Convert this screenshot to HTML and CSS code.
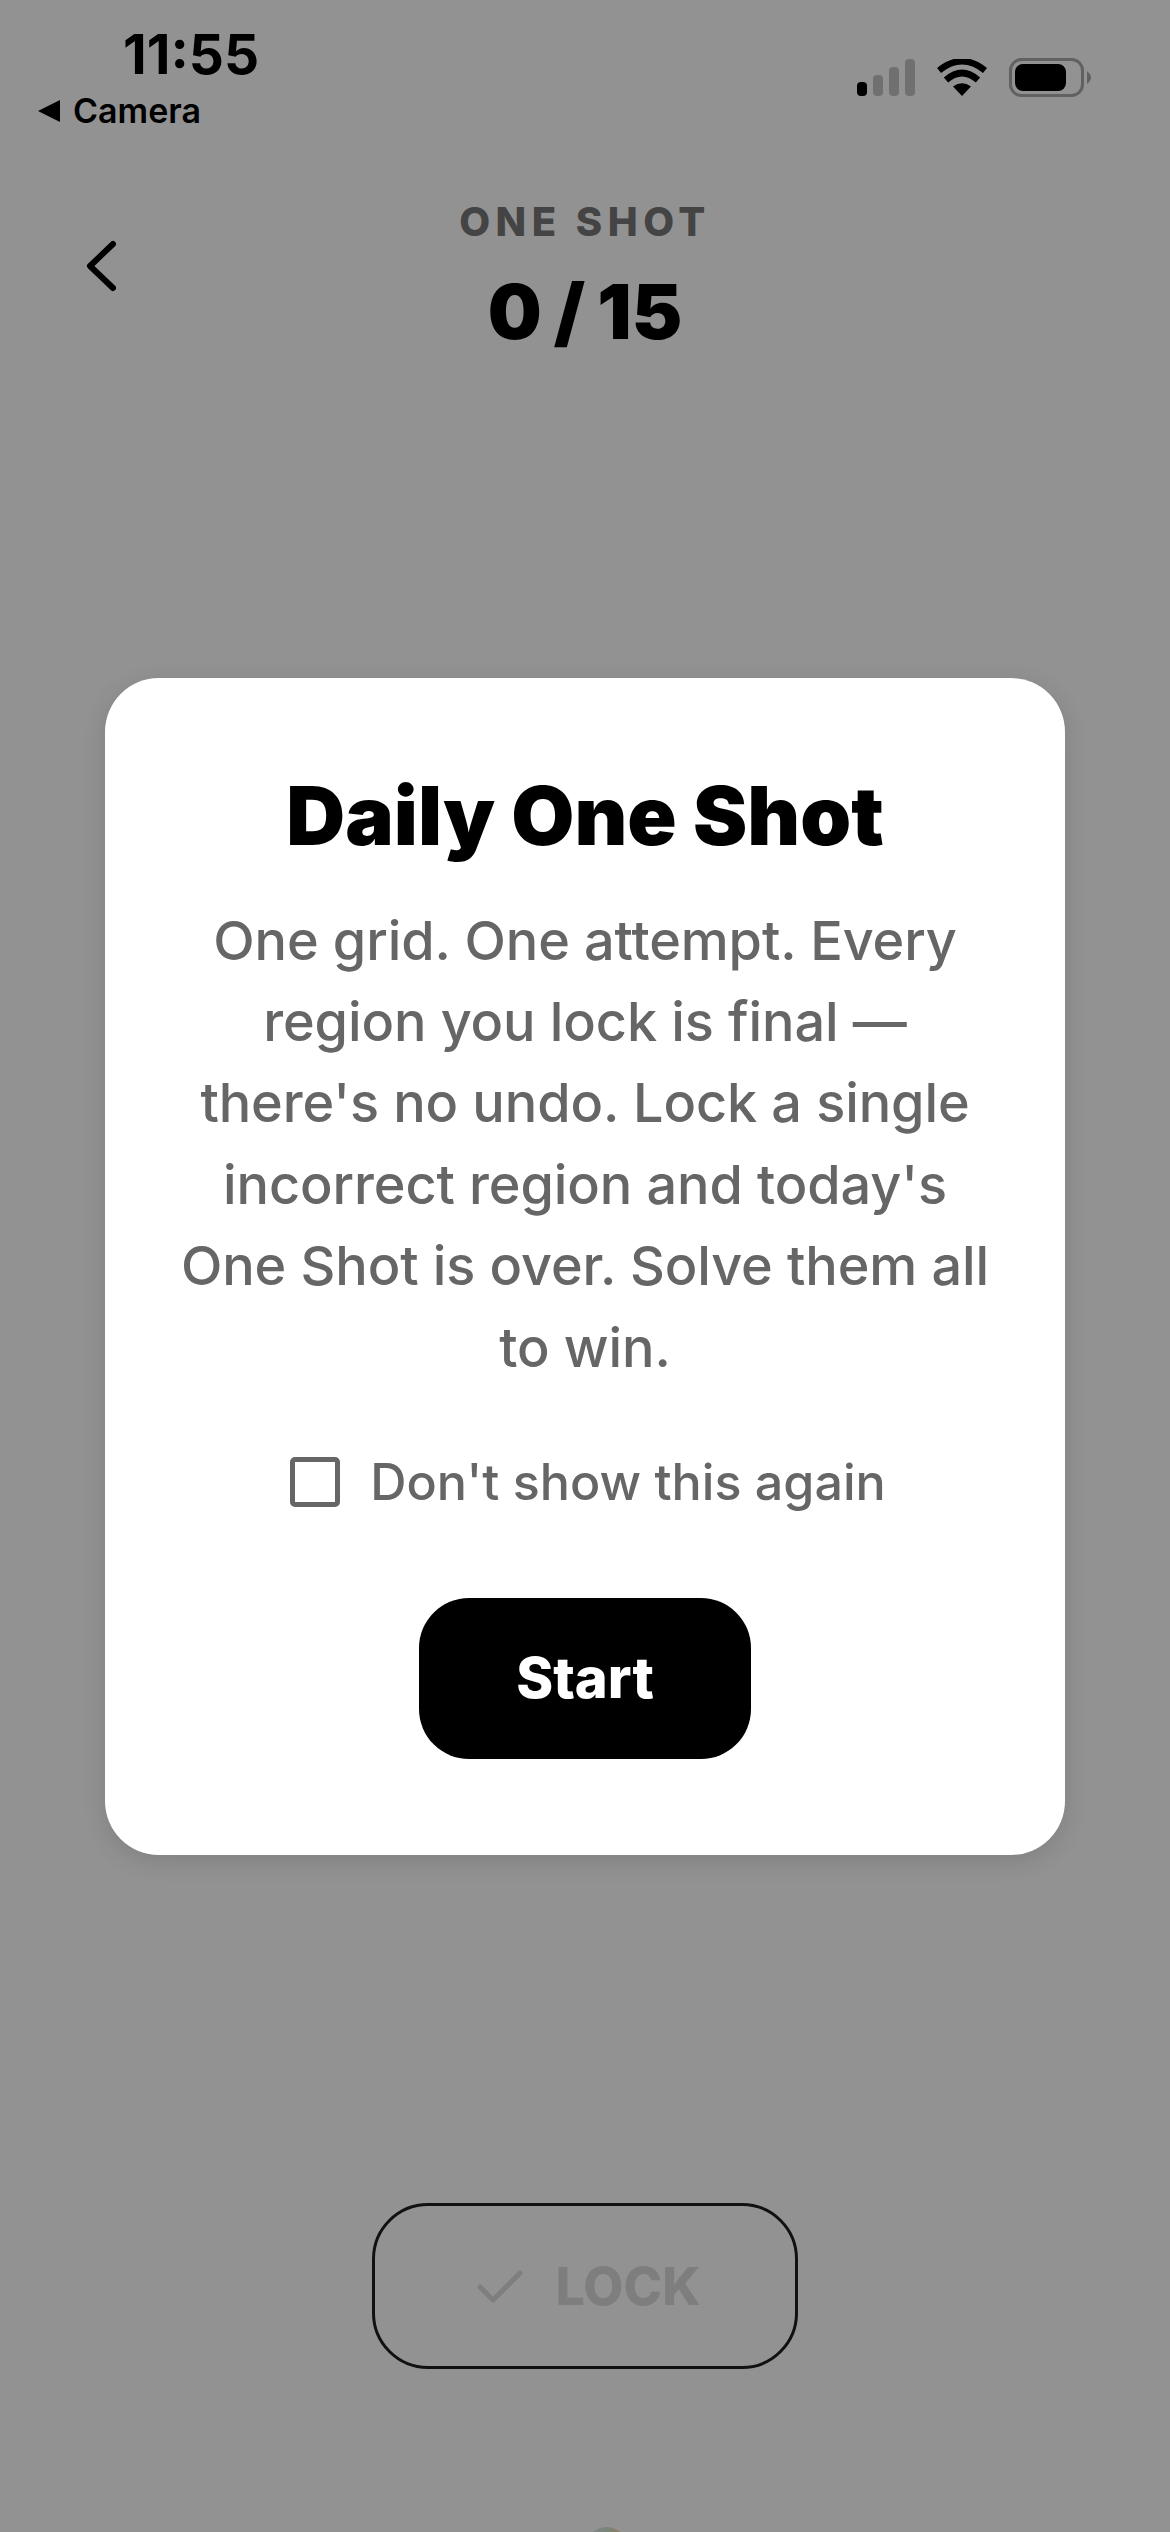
FILE: index.html
```html
<!DOCTYPE html>
<html>
<head>
<meta charset="utf-8"/>
<title>Daily One Shot</title>
<link rel="stylesheet" href="styles.css">
</head>
<body>
<div class="screen">

  <div class="status">
    <div class="status-left">
      <div class="clock">11:55</div>
      <div class="backlink"><span class="back-arrow"></span>Camera</div>
    </div>
    <div class="status-icons">
      <svg width="58" height="38" viewBox="0 0 58 38">
        <rect x="0" y="23" width="10" height="14" rx="4" fill="#000"/>
        <rect x="16" y="16" width="10" height="21" rx="4" fill="#c4c4c4"/>
        <rect x="32" y="8" width="10" height="29" rx="4" fill="#c4c4c4"/>
        <rect x="48" y="0" width="10" height="37" rx="4" fill="#c4c4c4"/>
      </svg>
      <svg width="50" height="37" viewBox="0 0 50 37">
        <path d="M25 37 L16 27.5 Q25 21 34 27.5 Z" fill="#000"/>
        <path d="M9 21 Q25 7 41 21" fill="none" stroke="#000" stroke-width="6.5"/>
        <path d="M2 11.5 Q25 -7 48 11.5" fill="none" stroke="#000" stroke-width="6.5"/>
      </svg>
      <svg width="82" height="39" viewBox="0 0 82 39">
        <rect x="1.5" y="1.5" width="72" height="36" rx="11" fill="none" stroke="#a9a9a9" stroke-width="3"/>
        <rect x="6" y="6" width="51" height="27" rx="8" fill="#000"/>
        <path d="M78 13 Q86 19.5 78 26 Z" fill="#a9a9a9"/>
      </svg>
    </div>
  </div>

  <div class="topbar">
    <svg class="chevron" width="36" height="56" viewBox="0 0 36 56">
      <path d="M30 6 L7 28 L30 50" fill="none" stroke="#000" stroke-width="6" stroke-linecap="round" stroke-linejoin="round"/>
    </svg>
    <div class="eyebrow">ONE SHOT</div>
    <div class="score">0 / 15</div>
  </div>

  <div class="board"></div>

  <button class="lock">
    <svg width="46" height="34" viewBox="0 0 46 34">
      <path d="M3 18 L16 31 L43 4" fill="none" stroke="#dcdcdc" stroke-width="5" stroke-linecap="round" stroke-linejoin="round"/>
    </svg>
    <span>LOCK</span>
  </button>

  <div class="peek"><div class="peek-dot"></div></div>

  <div class="scrim">
    <div class="card">
      <h1>Daily One Shot</h1>
      <p>One grid. One attempt. Every region you lock is final — there's no undo. Lock a single incorrect region and today's One Shot is over. Solve them all to win.</p>
      <label class="again"><span class="box"></span>Don't show this again</label>
      <button class="start">Start</button>
    </div>
  </div>

</div>
</body>
</html>
```

FILE: styles.css
```css
html, body {
  margin: 0;
  padding: 0;
}

body {
  background: #929292;
  font-family: Inter, "Liberation Sans", sans-serif;
}

.screen {
  position: relative;
  width: 1170px;
  height: 2532px;
  overflow: hidden;
  background: #fff;
  display: flex;
  flex-direction: column;
}

/* status bar */
.status {
  display: flex;
  justify-content: space-between;
  padding: 27px 79px 0 38px;
  height: 130px;
  box-sizing: border-box;
}

.clock {
  font-size: 55px;
  font-weight: 700;
  line-height: 54px;
  padding-left: 85px;
  color: #000;
}

.backlink {
  display: flex;
  align-items: center;
  gap: 13px;
  font-size: 34px;
  font-weight: 600;
  line-height: 40px;
  margin-top: 10px;
  color: #000;
}

.back-arrow {
  width: 0;
  height: 0;
  border-top: 11px solid transparent;
  border-bottom: 11px solid transparent;
  border-right: 22px solid #000;
}

.status-icons {
  display: flex;
  align-items: center;
  gap: 22px;
  height: 39px;
  margin-top: 31px;
}

/* header */
.topbar {
  position: relative;
  display: flex;
  flex-direction: column;
  align-items: center;
  padding-top: 69px;
}

.chevron {
  position: absolute;
  left: 83px;
  top: 108px;
}

.eyebrow {
  font-size: 40px;
  font-weight: 800;
  line-height: 46px;
  letter-spacing: 5.5px;
  color: #777;
}

.score {
  font-size: 76px;
  font-weight: 900;
  line-height: 88px;
  margin-top: 22px;
  word-spacing: -3px;
  color: #000;
}

.board {
  flex: 1;
}

/* lock button */
.lock {
  align-self: center;
  width: 426px;
  height: 166px;
  margin: 0;
  padding: 0 0 0 8px;
  box-sizing: border-box;
  background: #fff;
  border: 3px solid #1e1e1e;
  border-radius: 56px;
  display: flex;
  align-items: center;
  justify-content: center;
  gap: 32px;
  font-family: inherit;
  font-size: 52px;
  font-weight: 800;
  color: #dcdcdc;
}

.peek {
  height: 163px;
  padding: 158px 0 0 585px;
  box-sizing: border-box;
}

.peek-dot {
  width: 43px;
  height: 40px;
  border-radius: 22px 22px 0 0;
  background: linear-gradient(90deg, #f0e6fa, #cfe8cf 55%, #f3ddb0 75%, #cfe6e6);
}

/* modal */
.scrim {
  position: absolute;
  left: 0;
  top: 0;
  right: 0;
  bottom: 0;
  background: rgba(0, 0, 0, 0.427);
  display: flex;
  align-items: center;
  justify-content: center;
}

.card {
  width: 960px;
  height: 1177px;
  box-sizing: border-box;
  background: #fff;
  border-radius: 54px;
  box-shadow: 0 6px 24px rgba(0, 0, 0, 0.12);
  padding: 88px 64px 0;
  display: flex;
  flex-direction: column;
  align-items: center;
}

.card h1 {
  margin: 0;
  font-size: 81.5px;
  font-weight: 900;
  line-height: 100px;
  color: #000;
}

.card p {
  margin: 34px 0 0;
  font-size: 54px;
  font-weight: 540;
  line-height: 81.4px;
  letter-spacing: -0.1px;
  text-align: center;
  color: #666;
}

.again {
  display: flex;
  align-items: center;
  gap: 30px;
  margin-top: 54px;
  padding-left: 6px;
  font-size: 50.2px;
  font-weight: 540;
  line-height: 80px;
  color: #666;
}

.box {
  width: 50px;
  height: 50px;
  box-sizing: border-box;
  border: 5px solid #666;
  border-radius: 5px;
}

.start {
  width: 332px;
  height: 161px;
  margin-top: 76px;
  padding: 0;
  border: 0;
  border-radius: 50px;
  background: #000;
  color: #fff;
  font-family: inherit;
  font-size: 56px;
  font-weight: 800;
}
```
